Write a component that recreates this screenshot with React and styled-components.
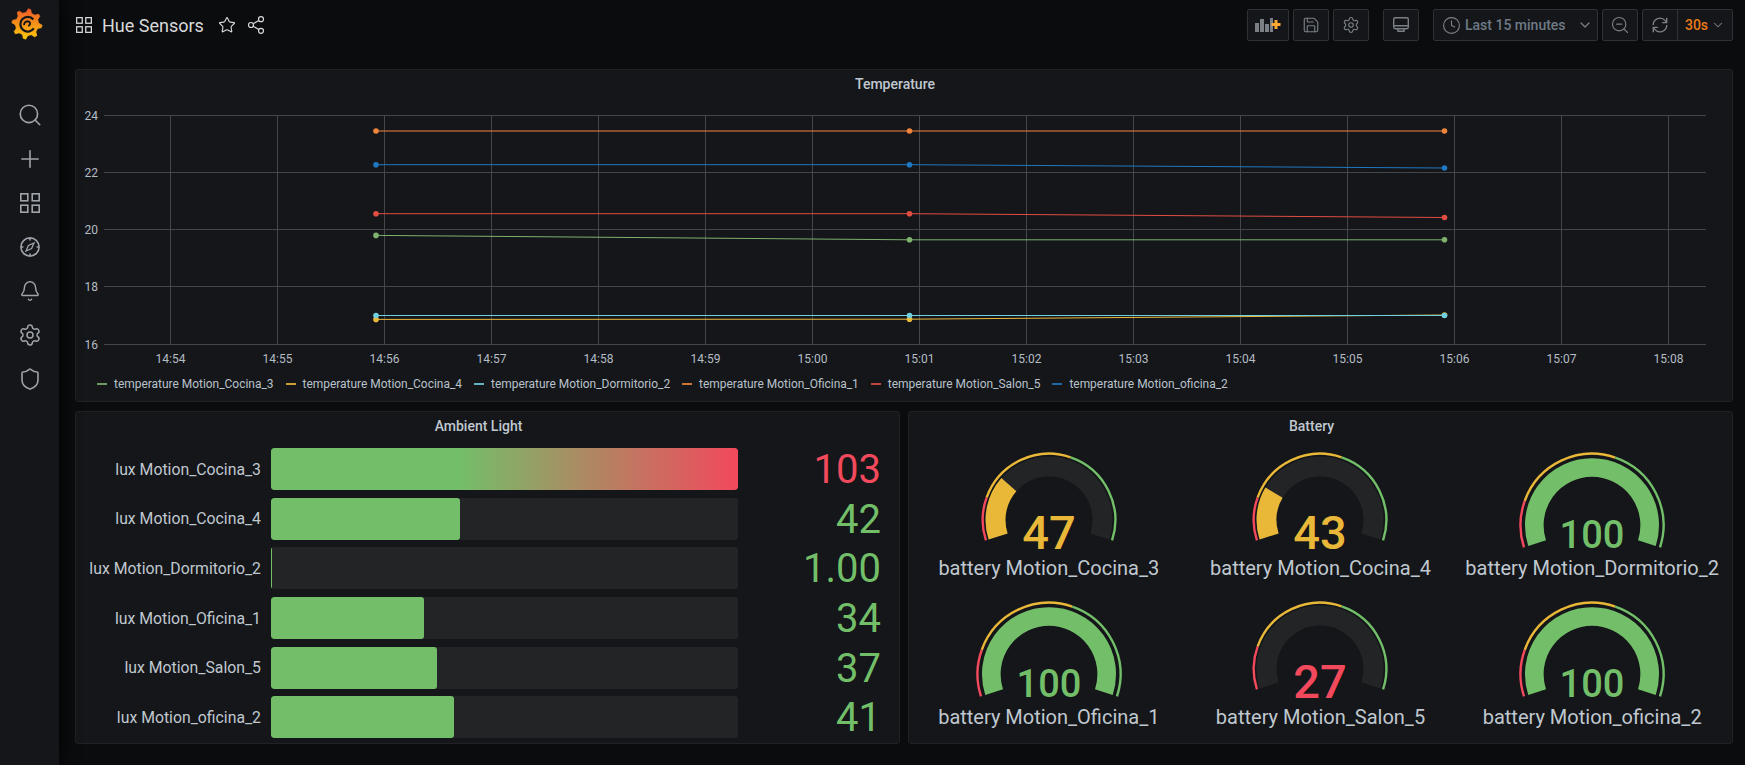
import React from "react";
import styled, { createGlobalStyle } from "styled-components";
import {
  Search, Plus, Bell, Settings, Shield, Star, Share2,
  Save, Clock, ChevronDown, ZoomOut,
} from "lucide-react";

const GlobalStyle = createGlobalStyle`
  html, body {
    margin: 0;
    padding: 0;
    height: 100%;
    overflow: hidden;
    background: #0b0c0e;
    font-family: Roboto, "Liberation Sans", sans-serif;
    color: #c7d0d9;
  }
`;

const Page = styled.div`
  display: flex;
  width: 1745px;
  height: 765px;
`;

const Sidebar = styled.nav`
  width: 59px;
  flex-shrink: 0;
  background: #141619;
  box-shadow: 0 0 20px #000;
  display: flex;
  flex-direction: column;
  align-items: center;
  position: relative;
`;

const LogoBox = styled.div`
  height: 93px;
  width: 100%;
  display: flex;
  justify-content: center;
  align-items: flex-start;
  padding: 8px 5px 0 0;
  box-sizing: border-box;
`;

const SideIcon = styled.div`
  width: 59px;
  height: 44px;
  display: flex;
  align-items: center;
  justify-content: center;
  color: #9fa3aa;
`;

const Main = styled.main`
  flex: 1;
  padding: 0 12px 0 16px;
  min-width: 0;
`;

const Toolbar = styled.header`
  height: 69px;
  box-sizing: border-box;
  padding: 9px 0 0 1px;
  display: flex;
  justify-content: space-between;
  align-items: flex-start;
`;

const TitleGroup = styled.div`
  display: flex;
  align-items: center;
  height: 32px;
  color: #d8d9da;
`;

const Title = styled.h1`
  margin: 0 14px 0 10px;
  font-size: 18px;
  font-weight: 400;
  color: #d8d9da;
`;

const TitleAction = styled.span`
  display: flex;
  margin-right: 10px;
`;

const Actions = styled.div`
  display: flex;
  align-items: center;
`;

const ToolButton = styled.div`
  height: 32px;
  width: ${props => props.width || 36}px;
  margin-left: ${props => props.gap || 4}px;
  box-sizing: border-box;
  display: flex;
  align-items: center;
  justify-content: center;
  background: #141619;
  border: 1px solid #2c3235;
  border-radius: 2px;
  color: #7b8087;
  font-size: 14px;
  font-weight: 500;
`;

const TimeButton = styled(ToolButton)`
  justify-content: flex-start;
  padding-left: 8px;
`;

const TimeText = styled.span`
  margin-left: 4px;
  flex: 1;
  color: #6f7a86;
`;

const CaretBox = styled.span`
  display: flex;
  margin-right: 4px;
`;

const RefreshGroup = styled.div`
  display: flex;
  margin-left: 4px;
  height: 32px;
  box-sizing: border-box;
  background: #141619;
  border: 1px solid #2c3235;
  border-radius: 2px;
`;

const RefreshPart = styled.div`
  width: 34px;
  display: flex;
  align-items: center;
  justify-content: center;
  color: #7b8087;
  border-right: 1px solid #2c3235;
`;

const IntervalPart = styled.div`
  width: 54px;
  display: flex;
  align-items: center;
  justify-content: center;
  gap: 3px;
  color: #eb7b18;
  font-size: 14px;
  font-weight: 500;
  svg { color: #7b8087; }
`;

const Panel = styled.section`
  height: 333px;
  box-sizing: border-box;
  background: #141619;
  border: 1px solid #202226;
  border-radius: 3px;
`;

const PanelTitle = styled.div`
  height: 28px;
  line-height: 28px;
  padding-right: 18px;
  text-align: center;
  font-size: 14px;
  font-weight: 500;
  color: #c0c8d0;
`;

const Chart = styled.svg`
  display: block;
  width: 1656px;
  height: 270px;
  text {
    font-family: Roboto, sans-serif;
    font-size: 12px;
    fill: #b4bcc4;
  }
`;

const Legend = styled.div`
  display: flex;
  align-items: center;
  height: 24px;
  padding-left: 21px;
  margin-top: 4px;
  font-size: 11.95px;
  color: #b9c2cb;
`;

const LegendItem = styled.div`
  display: flex;
  align-items: center;
  margin-right: 12px;
`;

const LegendDash = styled.i`
  display: block;
  width: 10px;
  height: 2px;
  margin-right: 7px;
  opacity: 0.85;
  background: ${props => props.color};
`;

const BottomRow = styled.div`
  display: grid;
  grid-template-columns: 825px 825px;
  gap: 8px;
  margin-top: 9px;
`;

const BarList = styled.div`
  display: grid;
  grid-template-rows: repeat(6, minmax(0, 1fr));
  row-gap: 10px;
  height: 288px;
  padding: 8px 18px 0 5px;
`;

const BarRow = styled.div`
  display: grid;
  grid-template-columns: 180px 467px 1fr;
  column-gap: 10px;
  align-items: center;
  min-height: 0;
`;

const BarLabel = styled.div`
  text-align: right;
  font-size: 15.8px;
  color: #c0c8d0;
  white-space: nowrap;
`;

const BarTrack = styled.div`
  height: 100%;
  background: #222426;
  border-radius: 3px;
  overflow: hidden;
`;

const BarFill = styled.div`
  height: 100%;
  border-radius: 3px;
  background: ${props => props.gradient
    ? "linear-gradient(to right, #73bf69 40%, #f2495c 100%)"
    : "#73bf69"};
`;

const BarValue = styled.div`
  text-align: right;
  font-size: 40px;
  line-height: 40px;
  padding-top: 2px;
  color: ${props => props.color};
`;

const GaugeGrid = styled.div`
  display: grid;
  grid-template-columns: repeat(3, 1fr);
  grid-auto-rows: 148.7px;
  padding: 0 4px;
`;

const GaugeCell = styled.div`
  display: flex;
  flex-direction: column;
  align-items: center;
  padding-top: 12px;
  box-sizing: border-box;
`;

const GaugeSvg = styled.svg`
  display: block;
  width: 220px;
  height: 104px;
  overflow: visible;
  text {
    font-family: Roboto, sans-serif;
    font-weight: 500;
    text-anchor: middle;
  }
`;

const GaugeLabel = styled.div`
  font-size: 20px;
  line-height: 24px;
  color: #c0c8d0;
  white-space: nowrap;
`;

const GREEN = "#73bf69";
const YELLOW = "#eab839";
const RED = "#f2495c";

const arc = (cx, cy, r, from, to) => {
  const pt = a => {
    const rad = ((a - 90) * Math.PI) / 180;
    return [cx + r * Math.cos(rad), cy + r * Math.sin(rad)];
  };
  const [x0, y0] = pt(from);
  const [x1, y1] = pt(to);
  return `M${x0} ${y0}A${r} ${r} 0 ${to - from > 180 ? 1 : 0} 1 ${x1} ${y1}`;
};

function Gauge({ name, value, color, big, fillTo }) {
  const r = big ? 72.7 : 67.5;
  const mid = big ? 57.7 : 53.5;
  const width = big ? 18.6 : 20;
  const cy = r + 0.5;
  const cx = 110;
  return (
    <GaugeCell>
      <GaugeSvg viewBox="0 0 220 104">
        <g fill="none" strokeWidth="2.4">
          <path d={arc(cx, cy, r - 1.2, -108, -70)} stroke={RED} />
          <path d={arc(cx, cy, r - 1.2, -70, 19)} stroke={YELLOW} />
          <path d={arc(cx, cy, r - 1.2, 19, 108)} stroke={GREEN} />
        </g>
        <path d={arc(cx, cy, mid, -108, 108)} fill="none" stroke="#222426" strokeWidth={width} />
        {fillTo != null && (
          <path d={arc(cx, cy, mid, -108, fillTo)} fill="none" stroke={color} strokeWidth={width} />
        )}
        <text x={cx} y={cy + (big ? 22.5 : 29)} fontSize={big ? 38 : 47} fill={color}>{value}</text>
      </GaugeSvg>
      <GaugeLabel>{name}</GaugeLabel>
    </GaugeCell>
  );
}

const gearPath = () => {
  const cx = 20, cy = 20, teeth = 8;
  let d = "";
  for (let i = 0; i < teeth; i++) {
    const step = (Math.PI * 2) / teeth;
    const base = i * step - Math.PI / 2 + 0.15;
    const pts = [
      [base - step * 0.5, 14.2],
      [base - step * 0.26, 14.8],
      [base - step * 0.08, 19],
      [base + step * 0.14, 18.4],
      [base + step * 0.28, 14.8],
    ];
    pts.forEach(([a, r], j) => {
      d += `${i === 0 && j === 0 ? "M" : "L"}${(cx + r * Math.cos(a)).toFixed(2)} ${(cy + r * Math.sin(a)).toFixed(2)}`;
    });
  }
  return d + "Z";
};

const GrafanaLogo = () => (
  <svg width="32" height="32" viewBox="0 0 40 40">
    <defs>
      <linearGradient id="logoGrad" x1="0" y1="0" x2="0" y2="1">
        <stop offset="0" stopColor="#f05a28" />
        <stop offset="1" stopColor="#fbca0a" />
      </linearGradient>
    </defs>
    <path d={gearPath()} fill="url(#logoGrad)" stroke="url(#logoGrad)" strokeWidth="1" strokeLinejoin="round" />
    <path d="M28.5 25.5a9.2 9.2 0 1 1-0.6-11.2" fill="none" stroke="#141619" strokeWidth="2.8" />
    <path d="M16.4 21.5a4.4 4.4 0 0 1 4.4-5c2.2 0.2 3.2 1.8 3 3.4 -0.2 1.4-1.2 2.2-2.4 2.2" fill="none" stroke="#141619" strokeWidth="2.4" />
  </svg>
);

const GridIcon = ({ size }) => (
  <svg width={size} height={size} viewBox="0 0 20 20" fill="none" stroke="currentColor" strokeWidth="1.6">
    <rect x="0.8" y="0.8" width="7" height="7" />
    <rect x="12.2" y="0.8" width="7" height="7" />
    <rect x="0.8" y="12.2" width="7" height="7" />
    <rect x="12.2" y="12.2" width="7" height="7" />
  </svg>
);

const CompassIcon = () => (
  <svg width="20" height="20" viewBox="0 0 20 20" fill="none" stroke="currentColor" strokeWidth="1.6">
    <circle cx="10" cy="10" r="9.1" />
    <path d="M10 1v2.4M10 16.6V19M1 10h2.4M16.6 10H19" />
    <path d="M14 6l-2.4 5.6L6 14l2.4-5.6z" strokeWidth="1.3" />
  </svg>
);

const AddPanelIcon = () => (
  <svg width="26" height="16" viewBox="0 0 26 16">
    <g fill="#7b8087">
      <rect x="0" y="6" width="4" height="9" />
      <rect x="5" y="2" width="4" height="13" />
      <rect x="10" y="7" width="4" height="8" />
      <rect x="15" y="1" width="3" height="14" />
    </g>
    <path d="M21 3v9M16.5 7.5h9" stroke="#ffa733" strokeWidth="3" />
  </svg>
);

const MonitorIcon = () => (
  <svg width="18" height="18" viewBox="0 0 18 18" fill="none" stroke="#7b8087" strokeWidth="1.4">
    <rect x="1.7" y="1.7" width="14.6" height="11" rx="1.6" />
    <path d="M1.7 9.7h14.6M6 12.7v2.6h6v-2.6" />
  </svg>
);

const SyncIcon = () => (
  <svg width="18" height="18" viewBox="0 0 18 18" fill="none" stroke="#7b8087" strokeWidth="1.4">
    <path d="M2.2 9A6.8 6.8 0 0 1 14 4.4l1.6 2" />
    <path d="M15.8 9A6.8 6.8 0 0 1 4 13.6l-1.6-2" />
    <path d="M15.7 1.8v4.8h-4.6M2.3 16.2v-4.8h4.6" />
  </svg>
);

const series = [
  { name: "temperature Motion_Cocina_3", color: "#7eb26d", ys: [235.4, 239.8, 239.8] },
  { name: "temperature Motion_Cocina_4", color: "#eab839", ys: [319.4, 319.2, 315] },
  { name: "temperature Motion_Dormitorio_2", color: "#6ed0e0", ys: [315.5, 315.5, 315.5] },
  { name: "temperature Motion_Oficina_1", color: "#ef843c", ys: [131, 131, 131] },
  { name: "temperature Motion_Salon_5", color: "#e24d42", ys: [213.7, 213.7, 217.5] },
  { name: "temperature Motion_oficina_2", color: "#1f78c1", ys: [164.7, 164.7, 168] },
];

const pointX = [376, 909.5, 1444.5];
const yTicks = [[24, 115.5], [22, 172.5], [20, 229.5], [18, 286.5], [16, 344.5]];
const xTicks = [
  "14:54", "14:55", "14:56", "14:57", "14:58", "14:59", "15:00", "15:01",
  "15:02", "15:03", "15:04", "15:05", "15:06", "15:07", "15:08",
];

// viewBox uses page coordinates, so the numbers read straight off the screenshot
function TemperatureChart() {
  return (
    <Chart viewBox="76 98 1656 270">
      <g stroke="#43464b" strokeWidth="1">
        {yTicks.map(([, y]) => <line key={y} x1="104" x2="1706" y1={y} y2={y} />)}
        {xTicks.map((t, i) => {
          const x = 170.5 + i * 107;
          return <line key={t} x1={x} x2={x} y1="115.5" y2="344.5" />;
        })}
      </g>
      {yTicks.map(([label, y]) => (
        <text key={label} x="98" y={y + 4} textAnchor="end">{label}</text>
      ))}
      {xTicks.map((t, i) => (
        <text key={t} x={170.5 + i * 107} y="363" textAnchor="middle">{t}</text>
      ))}
      {series.map(s => (
        <g key={s.name}>
          <polyline
            points={s.ys.map((y, i) => `${pointX[i]},${y}`).join(" ")}
            fill="none"
            stroke={s.color}
            strokeWidth="1"
          />
          {s.ys.map((y, i) => <circle key={i} cx={pointX[i]} cy={y} r="2.8" fill={s.color} />)}
        </g>
      ))}
    </Chart>
  );
}

const bars = [
  { name: "lux Motion_Cocina_3", value: "103", pct: 100, color: RED, gradient: true },
  { name: "lux Motion_Cocina_4", value: "42", pct: 40.4, color: GREEN },
  { name: "lux Motion_Dormitorio_2", value: "1.00", pct: 0.25, color: GREEN },
  { name: "lux Motion_Oficina_1", value: "34", pct: 32.7, color: GREEN },
  { name: "lux Motion_Salon_5", value: "37", pct: 35.6, color: GREEN },
  { name: "lux Motion_oficina_2", value: "41", pct: 39.1, color: GREEN },
];

const gauges = [
  { name: "battery Motion_Cocina_3", value: "47", color: YELLOW, fillTo: -48.6 },
  { name: "battery Motion_Cocina_4", value: "43", color: YELLOW, fillTo: -59.3 },
  { name: "battery Motion_Dormitorio_2", value: "100", color: GREEN, fillTo: 108, big: true },
  { name: "battery Motion_Oficina_1", value: "100", color: GREEN, fillTo: 108, big: true },
  { name: "battery Motion_Salon_5", value: "27", color: RED },
  { name: "battery Motion_oficina_2", value: "100", color: GREEN, fillTo: 108, big: true },
];

export default function App() {
  return (
    <Page>
      <GlobalStyle />
      <Sidebar>
        <LogoBox><GrafanaLogo /></LogoBox>
        <SideIcon><Search size={26} strokeWidth={1.5} /></SideIcon>
        <SideIcon><Plus size={28} strokeWidth={1.4} /></SideIcon>
        <SideIcon><GridIcon size={20} /></SideIcon>
        <SideIcon><CompassIcon /></SideIcon>
        <SideIcon><Bell size={22} strokeWidth={1.6} /></SideIcon>
        <SideIcon><Settings size={24} strokeWidth={1.5} /></SideIcon>
        <SideIcon><Shield size={24} strokeWidth={1.6} /></SideIcon>
      </Sidebar>
      <Main>
        <Toolbar>
          <TitleGroup>
            <GridIcon size={16} />
            <Title>Hue Sensors</Title>
            <TitleAction><Star size={18} strokeWidth={1.5} /></TitleAction>
            <TitleAction><Share2 size={20} strokeWidth={1.4} /></TitleAction>
          </TitleGroup>
          <Actions>
            <ToolButton width={42}><AddPanelIcon /></ToolButton>
            <ToolButton><Save size={18} strokeWidth={1.5} /></ToolButton>
            <ToolButton><Settings size={18} strokeWidth={1.5} /></ToolButton>
            <ToolButton gap={14}><MonitorIcon /></ToolButton>
            <TimeButton width={165} gap={14}>
              <Clock size={19} strokeWidth={1.4} />
              <TimeText>Last 15 minutes</TimeText>
              <CaretBox><ChevronDown size={16} strokeWidth={1.8} /></CaretBox>
            </TimeButton>
            <ToolButton><ZoomOut size={20} strokeWidth={1.4} /></ToolButton>
            <RefreshGroup>
              <RefreshPart><SyncIcon /></RefreshPart>
              <IntervalPart>30s<ChevronDown size={14} strokeWidth={1.8} /></IntervalPart>
            </RefreshGroup>
          </Actions>
        </Toolbar>
        <Panel>
          <PanelTitle>Temperature</PanelTitle>
          <TemperatureChart />
          <Legend>
            {series.map(s => (
              <LegendItem key={s.name}>
                <LegendDash color={s.color} />
                {s.name}
              </LegendItem>
            ))}
          </Legend>
        </Panel>
        <BottomRow>
          <Panel>
            <PanelTitle>Ambient Light</PanelTitle>
            <BarList>
              {bars.map(b => (
                <BarRow key={b.name}>
                  <BarLabel>{b.name}</BarLabel>
                  <BarTrack>
                    <BarFill gradient={b.gradient} style={{ width: `${b.pct}%` }} />
                  </BarTrack>
                  <BarValue color={b.color}>{b.value}</BarValue>
                </BarRow>
              ))}
            </BarList>
          </Panel>
          <Panel>
            <PanelTitle>Battery</PanelTitle>
            <GaugeGrid>
              {gauges.map(g => <Gauge key={g.name} {...g} />)}
            </GaugeGrid>
          </Panel>
        </BottomRow>
      </Main>
    </Page>
  );
}
